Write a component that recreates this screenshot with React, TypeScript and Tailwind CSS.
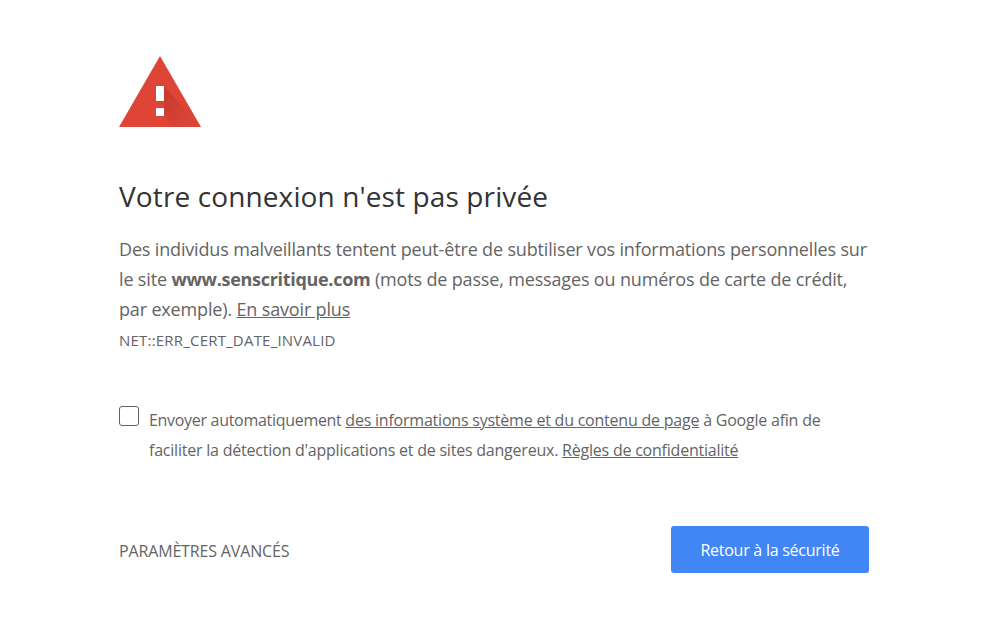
export default function App() {
  return (
    <div className="h-[634px] w-[984px] bg-white font-['Open_Sans','Noto_Sans',sans-serif] text-[#646464] overflow-hidden">
      <div className="w-[750px] ml-[119px] pt-[56px]">
        <svg width="82" height="71" viewBox="0 0 82 71" className="block">
          <defs>
            <linearGradient id="shade" x1="45" y1="45" x2="72" y2="68" gradientUnits="userSpaceOnUse">
              <stop offset="0" stopColor="#B7352A" stopOpacity="0.55" />
              <stop offset="1" stopColor="#B7352A" stopOpacity="0.04" />
            </linearGradient>
          </defs>
          <path d="M41 0L82 71H0Z" fill="#DE4537" />
          <path d="M45 30L82 71H57L45 60Z" fill="url(#shade)" />
          <rect x="37" y="30" width="8" height="15" fill="#fff" />
          <rect x="37" y="52" width="8" height="8" fill="#fff" />
        </svg>
        <h1 className="mt-[51px] text-[28px] leading-[36px] font-normal text-[#333333] tracking-[0.12px]">Votre connexion n'est pas privée</h1>
        <p className="mt-[20px] text-[18px] leading-[30px] tracking-[-0.16px]">
          Des individus malveillants tentent peut-être de subtiliser vos informations personnelles sur le site <strong className="tracking-[-0.3px]">www.senscritique.com</strong> (mots de passe, messages ou numéros de carte de crédit, par exemple). <span className="underline">En savoir plus</span>
        </p>
        <div className="mt-[6px] text-[15px] leading-[20px] tracking-[0.2px]">NET::ERR_CERT_DATE_INVALID</div>
        <div className="mt-[55px] flex gap-[10px]">
          <div className="mt-px h-5 w-5 shrink-0 rounded-[3px] border border-[#5f6368]" />
          <p className="text-[16px] leading-[30px] tracking-[-0.22px]">
            <span className="tracking-[-0.3px]">Envoyer automatiquement </span><span className="underline">des informations système et du contenu de page</span> à Google afin de faciliter la détection d'applications et de sites dangereux. <span className="underline">Règles de confidentialité</span>
          </p>
        </div>
        <div className="mt-[61px] flex items-center justify-between">
          <span className="pt-[2px] text-[16px] tracking-[-0.15px]">PARAMÈTRES AVANCÉS</span>
          <button className="h-[47px] w-[198px] rounded-[3px] bg-[#4285F4] pt-px text-[16px] text-white tracking-[-0.25px]">Retour à la sécurité</button>
        </div>
      </div>
    </div>
  );
}
